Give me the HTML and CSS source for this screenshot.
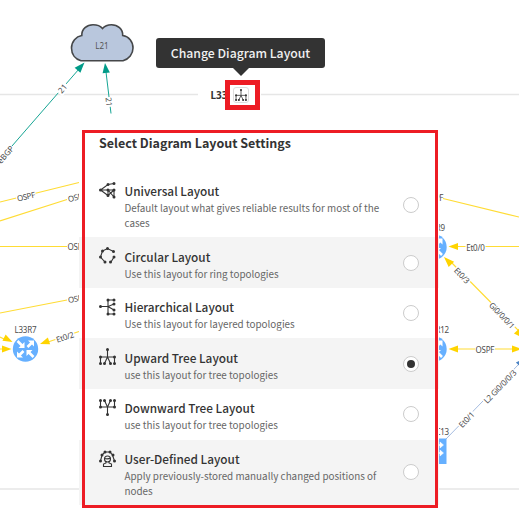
FILE: index.html
```html
<!DOCTYPE html>
<html lang="en">
<head>
<meta charset="utf-8">
<title>Diagram Layout Settings</title>
<link rel="stylesheet" href="styles.css">
</head>
<body>
<svg class="diagram" width="519" height="515" viewBox="0 0 519 515">
  <defs>
    <g id="router">
      <circle r="12.7" fill="#66b0ff"/>
      <g id="arms" stroke="#fff" stroke-width="2.600" fill="#fff">
        <path d="M-8-8L-3-3M8 8L3 3M2-2L6-6M-2 2L-6 6" fill="none"/>
        <path stroke="none" d="M-1-1V-7L-7-1ZM1 1V7L7 1ZM8.500-8.500V-2.500L2.500-8.500ZM-8.500 8.500V2.500L-2.500 8.500Z"/>
      </g>
    </g>
    <path id="head" d="M0 0L-9.500-3.500V3.500Z"/>
  </defs>
  <path class="frame" d="M0 94.500H198M261 94.500H519M0 489H519"/>
  <g class="yellow">
    <path d="M0 202L79 182.500M0 221L67 199.500M0 246.500H67M0 313L67 300M79 331.500L45 343M443 198.500L519 217M454 246.500H519M450 261L519 331M454 349H516"/>
    <path d="M0 337L5 339.500M0 349H3"/>
  </g>
  <g fill="#ffd400">
    <use href="#head" transform="translate(12.500 342) rotate(27)"/>
    <use href="#head" transform="translate(11.500 349)"/>
    <use href="#head" transform="translate(40 344) rotate(161)"/>
    <use href="#head" transform="translate(448.500 246.500) rotate(180)"/>
    <use href="#head" transform="translate(444 257) rotate(225) scale(1.100)"/>
    <use href="#head" transform="translate(448.500 349) rotate(180)"/>
    <use href="#head" transform="translate(521.500 349)"/>
    <use href="#head" transform="translate(523 338) rotate(47)"/>
  </g>
  <path class="teal" d="M12 146L79 69M111 113.500L106 72"/>
  <g fill="#009b88">
    <use href="#head" transform="translate(84.500 62.500) rotate(-48) scale(1.100)"/>
    <use href="#head" transform="translate(105 63) rotate(-97) scale(1.050)"/>
  </g>
  <path d="M446 439L519 364" stroke="#a5bce0" fill="none"/>
  <use href="#head" fill="#4b83c4" transform="translate(525 358) rotate(-46)"/>
  <path class="cloud" d="M81 60.700C75 59 71.500 54 71.500 48C71.500 41.500 76 36.500 81.800 35.500C81.500 29 87 24.700 93 24.700C97 24.700 100.500 26 102.500 28.500C105 25.500 108 24.700 111.500 24.700C117.500 24.700 123 29 122.700 35.500C129 36.500 133 41.500 133 48C133 54 129 59 123 60.700Z"/>
  <use href="#router" transform="translate(25.500 349)"/>
  <use href="#router" transform="translate(434 247)"/>
  <use href="#router" transform="translate(434 349)"/>
  <path fill="#66b0ff" d="M421 438.500H446.500V464H421Z"/>
  <path d="M436 444.500H440V442L443.500 445L440 448V445.500H436ZM436 452.500H440V450L443.500 453L440 456V453.500H436Z" fill="#fff" stroke="#fff" stroke-width=".5"/>
  <g class="labels">
    <text x="102" y="49" fill="#555">L21</text>
    <g transform="translate(62.500 88.500) rotate(-49)"><rect class="bg" x="-6" y="-5" width="12" height="10"/><text y="3">21</text></g>
    <g transform="translate(109 102) rotate(83)"><rect class="bg" x="-5" y="-5" width="10" height="10"/><text y="3">21</text></g>
    <g transform="translate(5.500 154.500) rotate(-49)"><text y="3">eBGP</text></g>
    <g transform="translate(26 196.500) rotate(-13)"><rect class="bg" x="-10" y="-5" width="20" height="10"/><text y="3" textLength="18.500">OSPF</text></g>
    <g transform="translate(77 197) rotate(-15)"><rect class="bg" x="-10" y="-5" width="20" height="10"/><text y="3" textLength="18.500">OSPF</text></g>
    <g transform="translate(77 247)"><rect class="bg" x="-10" y="-5" width="20" height="10"/><text y="3" textLength="19">OSPF</text></g>
    <g transform="translate(77 298.500) rotate(-10)"><rect class="bg" x="-10" y="-5" width="20" height="10"/><text y="3" textLength="18.500">OSPF</text></g>
    <g transform="translate(65 337) rotate(-18)"><rect class="bg" x="-10" y="-5" width="20" height="10"/><text y="3" textLength="18.500">Et0/2</text></g>
    <text x="25.500" y="333" textLength="22">L33R7</text>
    <text x="434" y="201" textLength="19">OSPF</text>
    <text x="434" y="231" textLength="22">L33R9</text>
    <text x="436" y="333" textLength="26">L33R12</text>
    <text x="436" y="435" textLength="26">L33C13</text>
    <g transform="translate(475.500 247.500)"><rect class="bg" x="-10" y="-5" width="20" height="10"/><text y="3" textLength="18.500">Et0/0</text></g>
    <g transform="translate(462 275.500) rotate(46)"><rect class="bg" x="-10" y="-5" width="20" height="10"/><text y="3" textLength="18.500">Et0/3</text></g>
    <g transform="translate(502 315.500) rotate(46)"><rect class="bg" x="-17" y="-5" width="34" height="10"/><text y="3" textLength="33">Gi0/0/0/1</text></g>
    <g transform="translate(485 349.500)"><rect class="bg" x="-10" y="-5" width="20" height="10"/><text y="3" textLength="19">OSPF</text></g>
    <g transform="translate(500 386.500) rotate(-46)"><rect class="bg" x="-22" y="-5" width="44" height="10"/><text y="3" textLength="43">L2 Gi0/0/0/3</text></g>
    <g transform="translate(466.500 419.500) rotate(-46)"><rect class="bg" x="-10" y="-5" width="20" height="10"/><text y="3" textLength="18.500">Et0/1</text></g>
  </g>
  <text class="group-name" x="210.500" y="99">L33</text>
</svg>

<div class="tooltip">Change Diagram Layout</div>
<div class="trigger">
  <button class="trigger-button" aria-label="Change Diagram Layout"><svg width="12" height="12" viewBox="0 0 17 17"><use href="#tree"/></svg></button>
</div>

<section class="dialog">
  <h1>Select Diagram Layout Settings</h1>
  <ul class="options">
    <li class="option tall">
      <svg class="icon" viewBox="0 0 17 17"><path d="M15 1.500L9 2.500L1.500 8L9 13.500M1.500 8H15V15L9 8V13.500L15 8"/><path class="dots" d="M15 1.500h0M9 2.500h0M1.500 8h0M9 8h0M15 8h0M9 13.500h0M15 15h0"/></svg>
      <div class="copy"><h2>Universal Layout</h2><p>Default layout what gives reliable results for most of the cases</p></div><span class="radio"></span>
    </li>
    <li class="option shaded">
      <svg class="icon" viewBox="0 0 17 17"><path d="M3.500 4L8.500 1.500L14.500 4.500M15 10L12 15M6 15L1.500 10L3.500 4"/><path class="dots" d="M3.500 4h0M8.500 1.500h0M14.500 4.500h0M15 10h0M11.500 15h0M6 15h0M1.500 10h0"/></svg>
      <div class="copy"><h2>Circular Layout</h2><p>Use this layout for ring topologies</p></div><span class="radio"></span>
    </li>
    <li class="option">
      <svg class="icon" viewBox="0 0 17 17"><path d="M1.500 8.500H9M15 2H9V16H15M15 6L9 8.500L15 12"/><path class="dots" d="M1.500 8.500h0M9 2h0M15 2h0M15 6h0M15 12h0M9 16h0M15 16h0"/></svg>
      <div class="copy"><h2>Hierarchical Layout</h2><p>Use this layout for layered topologies</p></div><span class="radio"></span>
    </li>
    <li class="option shaded">
      <svg class="icon" viewBox="0 0 17 17"><g id="tree"><path d="M8.500 1.500V9L5.500 15.500M8.500 9L11.500 15.500M1.500 15.500V9M15.500 9V15.500M1.500 9H15.500"/><path class="dots" d="M8.500 1.500h0M1.500 9h0M15.500 9h0M1.500 15.500h0M5.500 15.500h0M11.500 15.500h0M15.500 15.500h0"/></g></svg>
      <div class="copy"><h2>Upward Tree Layout</h2><p>use this layout for tree topologies</p></div><span class="radio selected"></span>
    </li>
    <li class="option">
      <svg class="icon" viewBox="0 0 17 17"><use href="#tree" transform="translate(0 17) scale(1 -1)"/></svg>
      <div class="copy"><h2>Downward Tree Layout</h2><p>use this layout for tree topologies</p></div><span class="radio"></span>
    </li>
    <li class="option tall shaded">
      <svg class="icon" viewBox="0 0 17 17"><path d="M1.500 11L3 5L6 2H11L13.500 5L15.500 11"/><circle cx="8.500" cy="9" r="3"/><path d="M5.500 8.500Q9 9.500 11.500 8M7 11.500V13L4.500 14V16.500H12.500V14L10 13V11.500"/><path class="dots" d="M1.500 11h0M3 5h0M6 2h0M11 2h0M14 5h0M15.500 11h0"/></svg>
      <div class="copy"><h2>User-Defined Layout</h2><p>Apply previously-stored manually changed positions of nodes</p></div><span class="radio"></span>
    </li>
  </ul>
</section>
</body>
</html>
```
FILE: styles.css
```css
* { box-sizing: border-box; }

body {
  position: relative;
  width: 523px;
  height: 515px;
  margin: 0;
  overflow: hidden;
  background: #fff;
  color: #333;
  font-family: "Noto Sans CJK SC", "Noto Sans", sans-serif;
}

.diagram { display: block; overflow: hidden; }
.frame { stroke: #e6e6e6; stroke-width: 1.5; fill: none; }
.yellow { stroke: #ffdc35; stroke-width: 1.2; fill: none; }
.teal { stroke: #16a594; fill: none; }
.cloud { fill: #b9c7dd; stroke: #454749; stroke-width: 1.6; }
.labels { font: 8px "Noto Sans", sans-serif; fill: #4c4c4c; text-anchor: middle; }
.bg { fill: #fff; }
.group-name { font: bold 10px "Noto Sans", sans-serif; fill: #333; }

.tooltip {
  position: absolute;
  left: 156px;
  top: 38px;
  width: 169px;
  height: 30px;
  border-radius: 3px;
  background: #333;
  color: #f1f1f1;
  font-size: 12.25px;
  font-weight: 500;
  line-height: 31px;
  text-align: center;
  white-space: nowrap;
}

.tooltip::after {
  content: "";
  position: absolute;
  left: 76px;
  top: 29px;
  border: 9px solid transparent;
  border-top-color: #333;
  border-bottom: 0;
}

.trigger {
  position: absolute;
  left: 225px;
  top: 80px;
  display: flex;
  align-items: center;
  padding-left: 3px;
  width: 35px;
  height: 30px;
  border: 5px solid #ed1c24;
  background: #fff;
}

.trigger-button {
  display: grid;
  place-items: center;
  width: 16px;
  height: 16px;
  padding: 0;
  border: 1px solid #ddd;
  border-radius: 3px;
  background: #fff;
}

svg.icon, .trigger svg { fill: none; stroke: #333; stroke-width: 1.1; }
.dots { stroke-width: 3; stroke-linecap: round; }

.dialog {
  position: absolute;
  left: 79px;
  top: 127px;
  width: 360px;
  height: 381px;
  padding-top: 6px;
  background: #fff;
}

.dialog::after {
  content: "";
  position: absolute;
  inset: 3px 1px 0 3px;
  border: 3px solid #ed1c24;
}

h1, h2, p, ul { margin: 0; padding: 0; }
h1 { padding-left: 20px; font-size: 12.5px; line-height: 20px; font-weight: 700; white-space: nowrap; }
.options { padding-top: 19px; list-style: none; }

.option {
  display: flex;
  align-items: center;
  height: 50.6px;
  padding: 0 20px;
}

.option.tall { height: 65.3px; }
.option.shaded { background: #f4f4f4; }
.icon { flex: none; align-self: flex-start; width: 17px; height: 17px; margin: 10px 8.5px 0 0; overflow: visible; }
.copy { width: 266px; padding-top: 2px; }
h2 { font-size: 11.8px; line-height: 19px; font-weight: 500; white-space: nowrap; }
p { position: relative; top: 1px; color: #666; font-size: 9.87px; line-height: 15px; }

.radio {
  display: grid;
  place-items: center;
  flex: none;
  width: 16px;
  height: 16px;
  margin-left: 12.5px;
  border: 1px solid #ccc;
  border-radius: 50%;
  background: #fff;
}

.radio.selected::after {
  content: "";
  width: 8px;
  height: 8px;
  border-radius: 50%;
  background: #333;
}
```
